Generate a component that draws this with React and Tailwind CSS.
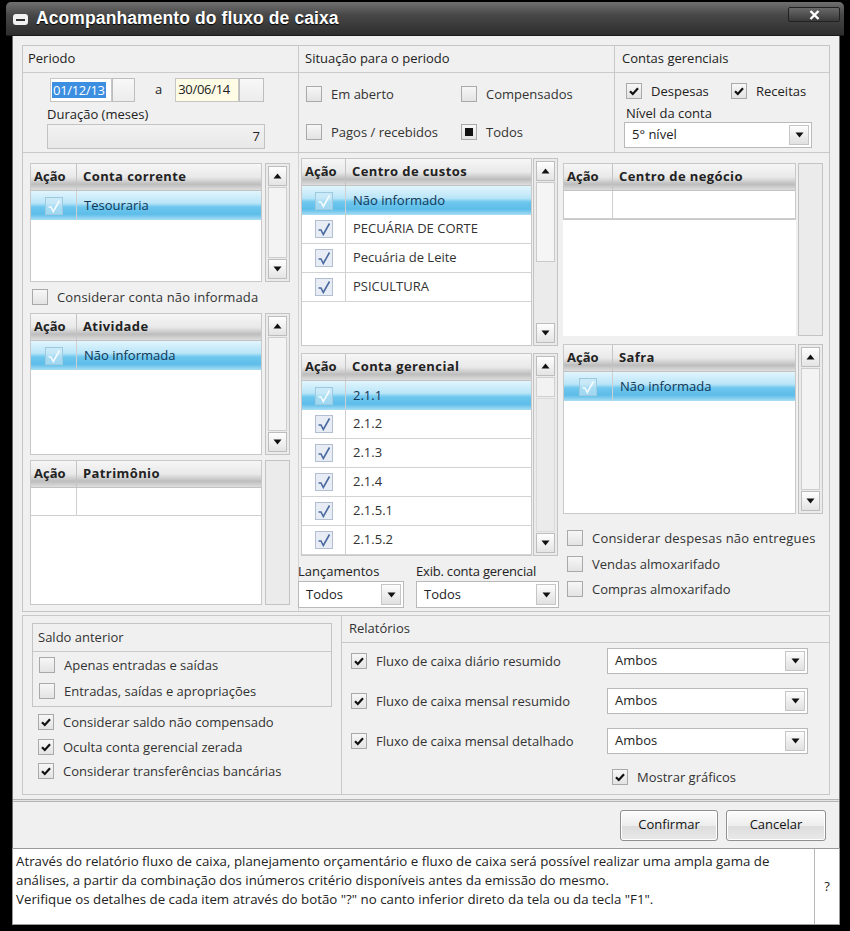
import React from 'react';

const HEAD_BG = 'bg-[linear-gradient(to_bottom,#f6f6f6_0%,#e9e9e9_50%,#bdbdbd_78%,#dedede_100%)]';
const SEL_BG = 'bg-[linear-gradient(to_bottom,#e2f5fd_0%,#b9e5f8_42%,#6ec7ee_55%,#5dbde9_80%,#a9def4_100%)]';

const Tri = ({ down }) => (
  <svg width="9" height="6" viewBox="0 0 9 6">
    <path d={down ? 'M0.5 0.5 H8.5 L4.5 5.5 Z' : 'M0.5 5.5 H8.5 L4.5 0.5 Z'} fill="#111" />
  </svg>
);

const CheckBox = ({ checked, filled }) => (
  <span className="w-[16px] h-[16px] shrink-0 border border-[#a9a9a9] bg-linear-to-b from-[#f7f7f7] to-[#e3e3e3] flex items-center justify-center">
    {checked && (
      <svg width="12" height="12" viewBox="0 0 12 12">
        <path d="M2 6.2 L4.8 9 L10 3.2" fill="none" stroke="#111" strokeWidth="2.2" />
      </svg>
    )}
    {filled && <span className="w-[8px] h-[8px] bg-[#111]" />}
  </span>
);

const Opt = ({ checked, filled, label, className = '' }) => (
  <div className={`flex items-center h-[16px] leading-[16px] gap-[9px] ${className}`}>
    <CheckBox checked={checked} filled={filled} />
    <span className="whitespace-nowrap">{label}</span>
  </div>
);

const GridCheck = ({ sel }) => (
  <span
    className={`w-[18px] h-[18px] flex items-center justify-center border ${
      sel ? 'border-[#9fc9df] bg-[#cdeaf7]/60' : 'border-[#b3bfd1] bg-[#e7ecf5]'
    }`}
  >
    <svg width="14" height="14" viewBox="0 0 14 14">
      <path d="M1.5 8 L4 8 L6.3 12.5 L12.5 1.5" fill="none" stroke={sel ? '#f4fbff' : '#4a6aa0'} strokeWidth="1.6" />
    </svg>
  </span>
);

const Grid = ({ title, rows = [], empty, className = '', actionW = 'w-[46px]' }) => (
  <div className={`bg-white border border-[#c8c8c8] flex flex-col overflow-hidden ${className}`}>
    <div className={`h-[27px] shrink-0 flex font-bold text-[#222] border-b border-[#c2c2c2] tracking-[0.4px] ${HEAD_BG}`}>
      <div className={`${actionW} shrink-0 border-r border-[#c4c4c4] flex items-center pl-[3px] tracking-normal`}>Ação</div>
      <div className="flex-1 flex items-center pl-[6px] whitespace-nowrap">{title}</div>
    </div>
    {rows.map((r, i) => (
      <div
        key={i}
        className={`h-[29px] shrink-0 flex ${i === 0 ? SEL_BG + ' text-[#123656]' : 'border-b border-[#d3d3d3] text-[#333]'}`}
      >
        <div className={`${actionW} shrink-0 border-r border-[#cfcfcf] flex items-center justify-center`}>
          <GridCheck sel={i === 0} />
        </div>
        <div className="flex-1 flex items-center pl-[7px]">{r}</div>
      </div>
    ))}
    {empty && (
      <div className="h-[28px] shrink-0 flex border-b border-[#cfcfcf]">
        <div className={`${actionW} shrink-0 border-r border-[#cfcfcf]`} />
        <div className="flex-1" />
      </div>
    )}
  </div>
);

const Arrow = ({ down }) => (
  <div className="h-[20px] mx-[2px] shrink-0 flex items-center justify-center border border-[#bdbdbd] bg-linear-to-b from-[#fefefe] to-[#e4e4e4]">
    <Tri down={down} />
  </div>
);

const Scroll = ({ className = '', arrows = true, thumb = 'full' }) => (
  <div className={`w-[25px] shrink-0 border border-[#c3c3c3] bg-[#ebebeb] flex flex-col py-[2px] ${className}`}>
    {arrows && <Arrow />}
    <div className="flex-1 flex flex-col mx-[2px] my-[1px]">
      {thumb === 'full' && <div className="flex-1 border border-[#cdcdcd] bg-[#f3f3f3]" />}
      {thumb === 'big' && (
        <>
          <div className="h-[80px] border border-[#c9c9c9] bg-[#f5f5f5]" />
          <div className="flex-1" />
        </>
      )}
      {thumb === 'small' && (
        <>
          <div className="h-[20px] border border-[#d0d0d0] bg-[#f2f2f2]" />
          <div className="flex-1 border border-[#dadada] mt-[1px]" />
        </>
      )}
    </div>
    {arrows && <Arrow down />}
  </div>
);

const Select = ({ value, className = '' }) => (
  <div className={`flex border border-[#b9b9b9] bg-white ${className}`}>
    <div className="flex-1 flex items-center pl-[7px] text-[#222]">{value}</div>
    <div className="w-[20px] m-[2px] flex items-center justify-center border border-[#c6c6c6] bg-linear-to-b from-[#fdfdfd] to-[#e0e0e0]">
      <Tri down />
    </div>
  </div>
);

const Box = ({ className = '' }) => (
  <div className={`border border-[#bdbdbd] bg-linear-to-b from-[#f8f8f8] to-[#ececec] ${className}`} />
);

const TitleBar = () => (
  <div className="h-[34px] shrink-0 rounded-t-[5px] flex items-center justify-between pl-[7px] pr-[4px] bg-[linear-gradient(to_bottom,#707070_0%,#474747_40%,#2e2e2e_100%)] border-b border-[#1a1a1a]">
    <div className="flex items-center gap-[8px]">
      <span className="w-[15px] h-[11px] rounded-[3px] bg-[#f2f2f2] flex items-center justify-center mt-[2px]">
        <span className="w-[9px] h-[2px] bg-[#333]" />
      </span>
      <span className="font-['Liberation_Sans',Arial,sans-serif] text-white font-bold text-[17.5px] tracking-[0.1px] [text-shadow:0_1px_1px_#000]">
        Acompanhamento do fluxo de caixa
      </span>
    </div>
    <div className="self-start mt-[5px] w-[52px] h-[15px] rounded-[2px] bg-linear-to-b from-[#6a6a6a] to-[#3a3a3a] border border-[#222] flex items-center justify-center">
      <svg width="11" height="10" viewBox="0 0 11 10">
        <path d="M1.5 1 L9.5 9 M9.5 1 L1.5 9" stroke="#fff" strokeWidth="2.4" />
      </svg>
    </div>
  </div>
);

const TopSection = () => (
  <div className="h-[107px] shrink-0 flex border-b border-[#c8c8c8]">
    <div className="w-[276px] shrink-0 border-r border-[#c8c8c8] flex flex-col">
      <div className="h-[27px] shrink-0 flex items-center pl-[5px] border-b border-[#cbcbcb]">Periodo</div>
      <div className="flex flex-col pl-[24px] pt-[5px]">
        <div className="flex items-center h-[24px] pl-[3px]">
          <div className="w-[62px] h-[24px] border border-[#c6c6c6] bg-white flex items-center pl-[1px]">
            <span className="bg-[#3b8ee0] text-white px-[1px] leading-[16px] tracking-[-0.3px]">01/12/13</span>
          </div>
          <Box className="w-[23px] h-[24px]" />
          <span className="ml-[20px] mr-[13px]">a</span>
          <div className="w-[64px] h-[24px] border border-[#c6c6c6] bg-[#fffce6] flex items-center pl-[2px] tracking-[-0.3px]">30/06/14</div>
          <Box className="w-[25px] h-[24px]" />
        </div>
        <div className="mt-[4px] leading-[17px]">Duração (meses)</div>
        <div className="mt-[1px] w-[218px] h-[25px] border border-[#c3c3c3] bg-linear-to-b from-[#f2f2f2] to-[#e8e8e8] flex items-center justify-end pr-[4px]">
          7
        </div>
      </div>
    </div>
    <div className="w-[316px] shrink-0 border-r border-[#c8c8c8] flex flex-col">
      <div className="h-[27px] shrink-0 flex items-center pl-[6px] border-b border-[#cbcbcb]">Situação para o periodo</div>
      <div className="grid grid-cols-[155px_1fr] gap-y-[22px] pl-[7px] pt-[13px] text-[#333]">
        <Opt label="Em aberto" />
        <Opt label="Compensados" />
        <Opt label="Pagos / recebidos" />
        <Opt filled label="Todos" />
      </div>
    </div>
    <div className="flex-1 flex flex-col">
      <div className="h-[27px] shrink-0 flex items-center pl-[7px] border-b border-[#cbcbcb]">Contas gerenciais</div>
      <div className="flex flex-col pl-[11px] pt-[10px]">
        <div className="flex items-center">
          <Opt checked label="Despesas" className="w-[105px] gap-[7px]" />
          <Opt checked label="Receitas" className="gap-[7px]" />
        </div>
        <div className="mt-[6px] leading-[16px]">Nível da conta</div>
        <Select value="5° nível" className="mt-[1px] w-[188px] h-[26px] -ml-[2px]" />
      </div>
    </div>
  </div>
);

const MiddleSection = () => (
  <div className="flex-1 flex">
    <div className="w-[276px] shrink-0 border-r border-[#d2d2d2] flex flex-col pl-[7px] pt-[10px]">
      <div className="h-[119px] flex gap-[3px]">
        <Grid title="Conta corrente" rows={['Tesouraria']} className="w-[232px]" />
        <Scroll />
      </div>
      <Opt label="Considerar conta não informada" className="mt-[7px] pl-[2px] text-[#333] tracking-[0.15px]" />
      <div className="h-[142px] flex gap-[3px] mt-[8px]">
        <Grid title="Atividade" rows={['Não informada']} className="w-[232px]" />
        <Scroll />
      </div>
      <div className="h-[145px] flex gap-[3px] mt-[5px]">
        <Grid title="Patrimônio" empty className="w-[232px]" />
        <Scroll arrows={false} thumb="none" />
      </div>
    </div>
    <div className="w-[262px] shrink-0 flex flex-col pl-[2px] pt-[5px]">
      <div className="h-[188px] flex gap-[1px]">
        <Grid
          title="Centro de custos"
          rows={['Não informado', 'PECUÁRIA DE CORTE', 'Pecuária de Leite', 'PSICULTURA']}
          className="w-[231px]"
          actionW="w-[44px]"
        />
        <Scroll thumb="big" />
      </div>
      <div className="h-[203px] flex gap-[1px] mt-[7px]">
        <Grid
          title="Conta gerencial"
          rows={['2.1.1', '2.1.2', '2.1.3', '2.1.4', '2.1.5.1', '2.1.5.2']}
          className="w-[231px]"
          actionW="w-[44px]"
        />
        <Scroll thumb="small" />
      </div>
      <div className="flex gap-[12px] mt-[5px] -ml-[3px]">
        <div className="flex flex-col w-[106px]">
          <span className="leading-[20px]">Lançamentos</span>
          <Select value="Todos" className="h-[27px]" />
        </div>
        <div className="flex flex-col w-[143px]">
          <span className="leading-[20px] whitespace-nowrap tracking-[-0.2px]">Exib. conta gerencial</span>
          <Select value="Todos" className="h-[27px]" />
        </div>
      </div>
    </div>
    <div className="flex-1 flex flex-col pl-[2px] pt-[10px]">
      <div className="h-[173px] flex gap-[2px]">
        <div className="w-[233px] bg-white flex flex-col">
          <Grid title="Centro de negócio" empty className="w-[233px]" actionW="w-[49px]" />
        </div>
        <Scroll arrows={false} thumb="none" />
      </div>
      <div className="h-[170px] flex gap-[2px] mt-[8px]">
        <Grid title="Safra" rows={['Não informada']} className="w-[233px]" actionW="w-[49px]" />
        <Scroll thumb="full" />
      </div>
      <div className="flex flex-col gap-[9.5px] mt-[16px] pl-[4px] text-[#333]">
        <Opt label="Considerar despesas não entregues" className="gap-[7px] tracking-[0.2px]" />
        <Opt label="Vendas almoxarifado" className="gap-[7px]" />
        <Opt label="Compras almoxarifado" className="gap-[7px]" />
      </div>
    </div>
  </div>
);

const BottomSection = () => (
  <div className="h-[180px] mt-[3px] shrink-0 flex">
    <div className="w-[320px] shrink-0 border border-[#c8c8c8] flex flex-col pl-[9px] pt-[7px] text-[#333]">
      <div className="w-[300px] h-[84px] border border-[#c4c4c4] flex flex-col">
        <div className="h-[28px] shrink-0 flex items-center pl-[5px] border-b border-[#c8c8c8]">Saldo anterior</div>
        <div className="flex flex-col gap-[10px] pl-[6px] pt-[5px]">
          <Opt label="Apenas entradas e saídas" />
          <Opt label="Entradas, saídas e apropriações" />
        </div>
      </div>
      <div className="flex flex-col gap-[8.5px] pl-[6px] mt-[7px]">
        <Opt checked label="Considerar saldo não compensado" className="gap-[8px]" />
        <Opt checked label="Oculta conta gerencial zerada" className="gap-[8px]" />
        <Opt checked label="Considerar transferências bancárias" className="gap-[8px]" />
      </div>
    </div>
    <div className="flex-1 border border-l-0 border-[#c8c8c8] flex flex-col text-[#333]">
      <div className="h-[27px] shrink-0 flex items-center pl-[7px] border-b border-[#c8c8c8]">Relatórios</div>
      <div className="flex flex-col gap-[14px] pt-[5px] pl-[9px]">
        {['Fluxo de caixa diário resumido', 'Fluxo de caixa mensal resumido', 'Fluxo de caixa mensal detalhado'].map((t) => (
          <div key={t} className="flex items-center h-[26px]">
            <Opt checked label={t} className="w-[256px] gap-[7px]" />
            <Select value="Ambos" className="w-[201px] h-[26px]" />
          </div>
        ))}
        <Opt checked label="Mostrar gráficos" className="ml-[261px] mt-[1px] gap-[7px]" />
      </div>
    </div>
  </div>
);

const Button = ({ children, className = '' }) => (
  <div
    className={`h-[31px] flex items-center justify-center rounded-[3px] border border-[#8f8f8f] bg-[linear-gradient(to_bottom,#fdfdfd_0%,#ededed_50%,#dcdcdc_51%,#e9e9e9_100%)] text-[#111] shadow-[inset_0_0_0_1px_#fff] ${className}`}
  >
    {children}
  </div>
);

export default function App() {
  return (
    <div className="w-[850px] h-[931px] bg-black flex flex-col px-[6px] pt-[2px] pb-[6px] font-['Open_Sans',Arial,sans-serif] text-[13px] text-[#222] overflow-hidden">
      <TitleBar />
      <div className="flex-1 flex flex-col pl-[6px] pr-[4px]">
        <div className="h-[812px] shrink-0 bg-[#f0f0f0] border-x border-[#6b6b6b] flex flex-col px-[9px] pt-[9px]">
          <div className="h-[567px] shrink-0 border border-[#c6c6c6] flex flex-col">
            <TopSection />
            <MiddleSection />
          </div>
          <BottomSection />
          <div className="mt-[4px] -mx-[9px] h-[3px] border-y border-[#b4b4b4] bg-[#e4e4e4]" />
          <div className="flex-1 flex items-center justify-end gap-[8px] pr-[4px]">
            <Button className="w-[98px]">Confirmar</Button>
            <Button className="w-[100px]">Cancelar</Button>
          </div>
        </div>
        <div className="h-[77px] shrink-0 flex bg-white border border-[#9a9a9a]">
          <div className="flex-1 pl-[3px] pt-[3px] text-[13.3px] leading-[19px] text-[#222] whitespace-nowrap">
            Através do relatório fluxo de caixa, planejamento orçamentário e fluxo de caixa será possível realizar uma ampla gama de
            <br />
            análises, a partir da combinação dos inúmeros critério disponíveis antes da emissão do mesmo.
            <br />
            Verifique os detalhes de cada item através do botão "?" no canto inferior direto da tela ou da tecla "F1".
          </div>
          <div className="w-[25px] shrink-0 border-l border-[#b8b8b8] flex items-center justify-center text-[13px]">?</div>
        </div>
      </div>
    </div>
  );
}
